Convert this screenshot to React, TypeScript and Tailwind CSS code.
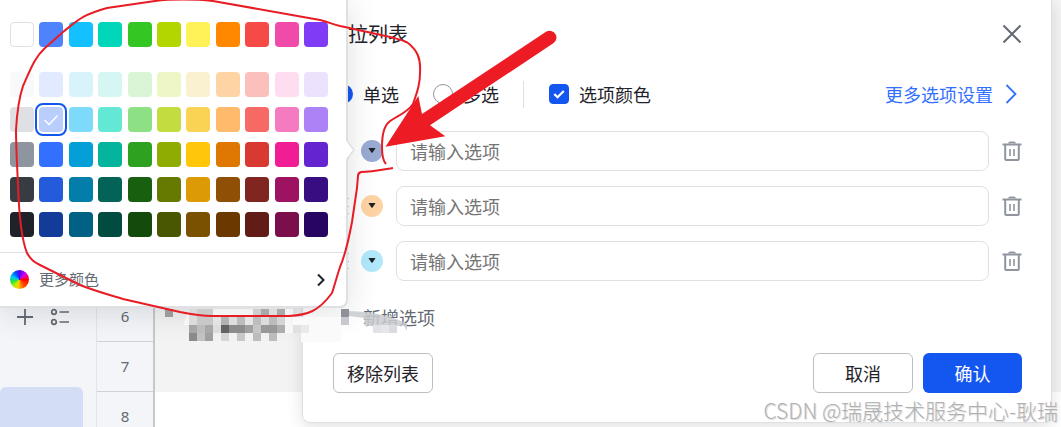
import { useState } from "react";

const palette = [
	["#ffffff", "#4e83fd", "#14c0ff", "#00d6b9", "#34c724", "#b3d600", "#fff258", "#ff8800", "#f54a45", "#f14ba9", "#7f3bf5"],
	["#f8f9fa", "#e1eaff", "#d9f3fd", "#d5f6f2", "#d9f5d6", "#eef6c6", "#faf1d1", "#fed4a4", "#fbbfbc", "#fdddef", "#ece2fe"],
	["#dee0e3", "#bacefd", "#7edafb", "#64e8d6", "#8ee085", "#c3dd40", "#fad355", "#ffba6b", "#f76964", "#f57ac0", "#ad82f7"],
	["#8f959e", "#3370ff", "#049fd7", "#04b49c", "#2ea121", "#8fac02", "#ffc60a", "#de7802", "#d83931", "#f01d94", "#6425d0"],
	["#373c43", "#245bdb", "#037eaa", "#036356", "#186010", "#667901", "#dc9b04", "#8f4f04", "#812520", "#9e1361", "#380d82"],
	["#1f2329", "#133c9a", "#006185", "#024b41", "#124b0c", "#495700", "#795101", "#6b3900", "#621c18", "#7a0f4b", "#270561"],
];

const options = [
	{ color: "#9aabd4", name: "选项一" },
	{ color: "#fed4a4", name: "选项二" },
	{ color: "#b1e8fc", name: "选项三" },
];

// x, y, grey level of every censored block
const blocks: [number, number, string][] = [
	[165, 309, "#9b9b9b"],
	[189, 309, "#dadada"], [197, 309, "#cbcbcb"], [205, 309, "#cbcbcb"],
	[253, 309, "#cecece"], [261, 309, "#a9a9a9"], [269, 309, "#dedede"], [277, 309, "#a9a9a9"], [293, 309, "#dddddd"],
	[189, 317, "#dcdcdc"], [197, 317, "#c8c8c8"], [205, 317, "#c8c8c8"], [213, 317, "#e3e3e3"],
	[221, 317, "#b2b2b2"], [229, 317, "#dedede"], [237, 317, "#bcbcbc"], [245, 317, "#e6e6e6"],
	[253, 317, "#bdbdbd"], [261, 317, "#dcdcdc"], [269, 317, "#bbbbbb"], [277, 317, "#d4d4d4"],
	[189, 325, "#a6a6a6"], [197, 325, "#bcbcbc"], [205, 325, "#a8a8a8"], [213, 325, "#dddddd"],
	[221, 325, "#636363"], [229, 325, "#8c8c8c"], [237, 325, "#8c8c8c"], [245, 325, "#a0a0a0"],
	[253, 325, "#c6c6c6"], [261, 325, "#999999"], [269, 325, "#989898"], [277, 325, "#adadad"],
	[293, 325, "#dfe0e1"], [301, 325, "#e9eaeb"],
	[189, 333, "#8a8a8a"], [197, 333, "#c2c2c2"], [205, 333, "#a0a0a0"], [221, 333, "#d5d5d5"],
	[237, 333, "#c8c8c8"], [253, 333, "#bcbcbc"], [269, 333, "#bcbcbc"],
	[341, 309, "#8d9096"], [341, 317, "#c8c9ce"],
	[373, 325, "#e2e3e8"], [381, 325, "#e6e6ea"], [389, 325, "#d9dae2"],
];

function TrashIcon() {
	return (
		<svg width="20" height="20" viewBox="0 0 20 20" fill="none" stroke="#8f959e">
			<path d="M0.500 3.500h19" strokeWidth="2" />
			<path d="M7 2.600c0-1 .6-1.200 1.400-1.200h3.200c.8 0 1.400.2 1.400 1.200" strokeWidth="1.800" />
			<path d="M3.200 4v14c0 .7.400 1 1 1h11.600c.6 0 1-.3 1-1v-14" strokeWidth="2" />
			<path d="M8 8v7M12 8v7" strokeWidth="1.600" />
		</svg>
	);
}

function Sheet() {
	return (
		<div className="flex h-full text-[#646a73]">
			<aside className="flex w-24 shrink-0 flex-col bg-[#f4f5f8]">
				<div className="flex items-center gap-4 pt-[307px] pl-4">
					<button aria-label="添加">
						<svg width="18" height="20" viewBox="0 0 18 20" stroke="#646a73" strokeWidth="1.800">
							<path d="M9 2v16M1 10h16" />
						</svg>
					</button>
					<button aria-label="列表">
						<svg width="20" height="20" viewBox="0 0 20 20" fill="none" stroke="#646a73" strokeWidth="1.700">
							<circle cx="4" cy="5" r="2.300" />
							<circle cx="4" cy="15" r="2.300" />
							<path d="M9.500 5H19M9.500 15H19" />
						</svg>
					</button>
				</div>
				<div className="mt-[60px] mr-[13px] flex-1 rounded-t-md bg-[#d3ddf5]" />
			</aside>
			<div className="flex w-[59px] shrink-0 flex-col overflow-hidden border-r-2 border-l border-r-[#c6c8cc] border-l-[#e2e4e8] bg-[#f4f5f8] pt-[292px] text-center font-['Noto_Sans',sans-serif] text-[15px] leading-[49px] font-normal">
				<div className="border-b border-[#cfd1d5]">6</div>
				<div className="border-b border-[#cfd1d5]">7</div>
				<div>8</div>
			</div>
			<div className="flex flex-1 flex-col">
				<div className="h-[392px] shrink-0 bg-[#f3f3f3]" />
				<div className="flex-1 bg-white" />
			</div>
		</div>
	);
}

function ListDialog() {
	const [mode, setMode] = useState("single");
	return (
		<div
			role="dialog"
			aria-label="下拉列表"
			className="absolute top-0 right-[9px] left-[302px] rounded-b-lg border border-t-0 border-[#dee0e3] bg-white pr-[29px] pb-[29px] pl-[30px] text-lg text-[#1f2329] shadow-[0_4px_16px_rgba(0,0,0,0.12)]"
		>
			<div className="flex h-[68px] items-center justify-between">
				<h2 className="-ml-[5px] text-xl">下拉列表</h2>
				<button aria-label="关闭">
					<svg width="20" height="20" viewBox="0 0 20 20" stroke="#646a73" strokeWidth="2">
						<path d="M1.500 1.500l17 17M18.500 1.500l-17 17" />
					</svg>
				</button>
			</div>
			<div className="flex h-[52px] items-center">
				<label className="flex items-center gap-[10px]">
					<input
						type="radio"
						name="mode"
						checked={mode === "single"}
						onChange={() => setMode("single")}
						className="size-5 appearance-none rounded-full border border-[#8f959e] checked:border-[6px] checked:border-[#1456f0]"
					/>
					单选
				</label>
				<label className="ml-[34px] flex items-center gap-[10px]">
					<input
						type="radio"
						name="mode"
						checked={mode === "multi"}
						onChange={() => setMode("multi")}
						className="size-5 appearance-none rounded-full border border-[#8f959e] checked:border-[6px] checked:border-[#1456f0]"
					/>
					多选
				</label>
				<div className="ml-6 h-[27px] w-px bg-[#dee0e3]" />
				<label className="ml-[25px] flex items-center gap-[10px]">
					<span className="grid size-5">
						<input
							type="checkbox"
							defaultChecked
							className="col-start-1 row-start-1 size-5 appearance-none rounded border border-[#8f959e] checked:border-[#1456f0] checked:bg-[#1456f0]"
						/>
						<svg className="pointer-events-none col-start-1 row-start-1" width="20" height="20" viewBox="0 0 20 20" fill="none" stroke="#fff" strokeWidth="2.200">
							<path d="M5.300 10l3.200 3.200 6.300-6.200" />
						</svg>
					</span>
					选项颜色
				</label>
				<a href="#more" className="mr-[5px] ml-auto flex items-center gap-3 text-[#3370ff]">
					更多选项设置
					<svg width="12" height="20" viewBox="0 0 12 20" fill="none" stroke="#3370ff" strokeWidth="1.800">
						<path d="M1.500 1l9 9-9 9" />
					</svg>
				</a>
			</div>
			<div className="mt-[11px] flex flex-col gap-[15px]">
				{options.map((option) => (
					<div key={option.name} className="flex items-center">
						<svg className="mr-2" width="20" height="20" viewBox="0 0 20 20" fill="#bbbfc4">
							<path d="M8 2h2v1H8zM8 10h2v1H8zM8 17h2v1H8zM14 2h2v1h-2zM14 10h2v1h-2zM14 17h2v1h-2z" />
						</svg>
						<button
							aria-label="选择颜色"
							className="mr-[13px] flex size-[22px] items-center justify-center rounded-full"
							style={{ backgroundColor: option.color }}
						>
							<svg width="8" height="6" viewBox="0 0 8 6" fill="#1f2329">
								<path d="M1 0h6q.5 0 .3.500L4.600 4.500q-.6.700-1.200 0L.7.500Q.5 0 1 0z" />
							</svg>
						</button>
						<input
							type="text"
							aria-label={option.name}
							placeholder="请输入选项"
							className="mr-[13px] h-10 min-w-0 flex-1 rounded-lg border border-[#dee0e3] px-[13px] placeholder:text-[#757575]"
						/>
						<button aria-label="删除">
							<TrashIcon />
						</button>
					</div>
				))}
			</div>
			<button className="flex h-[72px] items-center gap-[10px] text-[#646a73]">
				<svg width="20" height="20" viewBox="0 0 20 20" stroke="#646a73" strokeWidth="1.800">
					<path d="M12 2v9" />
				</svg>
				新增选项
			</button>
			<div className="flex gap-[10px]">
				<button className="mr-auto h-10 w-[100px] rounded-md border border-[#bbbfc4]">移除列表</button>
				<button className="h-10 w-[100px] rounded-md border border-[#bbbfc4]">取消</button>
				<button className="h-10 w-[99px] rounded-md bg-[#1456f0] text-white">确认</button>
			</div>
		</div>
	);
}

function ColorPicker() {
	return (
		<div className="absolute top-0 left-0 w-[348px] rounded-br-lg border-r-2 border-b-2 border-[#dee0e3] bg-white shadow-[0_4px_32px_rgba(31,35,41,0.14)]">
			<svg className="absolute top-[141px] -right-[9px]" width="9" height="18" viewBox="0 0 9 18">
				<path d="M0 0L1 0 8 9 1 18 0 18z" fill="#fff" />
				<path d="M1 0L8 9 1 18" fill="none" stroke="#dee0e3" strokeWidth="1.500" />
			</svg>
			<div className="flex flex-col gap-[10px] pt-[22px] pr-[18px] pb-[15px] pl-[10px]">
				{palette.map((row, i) => (
					<div key={i} className={i === 0 ? "mb-[15px] flex justify-between" : "flex justify-between"}>
						{row.map((color) => (
							<button
								key={color}
								aria-label={color}
								className={
									color === "#bacefd"
										? "flex h-[25px] w-6 items-center justify-center rounded-[4px] outline-2 outline-offset-2 outline-[#1456f0]"
										: color === "#ffffff"
											? "h-[25px] w-6 rounded-[4px] border border-[#dee0e3]"
											: "h-[25px] w-6 rounded-[4px]"
								}
								style={{ backgroundColor: color }}
							>
								{color === "#bacefd" && (
									<svg width="16" height="12" viewBox="0 0 16 12" fill="none" stroke="#fff" strokeWidth="1.500">
										<path d="M1.500 6l4.500 4.500L14.500 1.500" />
									</svg>
								)}
							</button>
						))}
					</div>
				))}
			</div>
			<button className="flex h-[54px] w-full items-center border-t border-[#dee0e3] pr-5 pl-[10px] text-[15px] text-[#646a73]">
				<span className="mr-[10px] size-[19px] rounded-full bg-[conic-gradient(#5000ff,#e000e0_50deg,#ff0000_90deg,#ff5a00_150deg,#ffd000_190deg,#b0f000_220deg,#20e040_255deg,#00c8ff_290deg,#0050ff_330deg,#5000ff)]" />
				更多颜色
				<svg className="ml-auto" width="10" height="14" viewBox="0 0 10 14" fill="none" stroke="#1f2329" strokeWidth="2">
					<path d="M2 1.500L7.500 7 2 12.500" />
				</svg>
			</button>
		</div>
	);
}

function Annotations() {
	return (
		<svg className="pointer-events-none absolute top-0 left-0" width="1061" height="427" viewBox="0 0 1061 427" fill="none">
			<path d="M189 309H301V333H285V325H183z" fill="#fff" fillOpacity=".55" />
			<path d="M293 317H341V342H301V333H293z" fill="#fafafa" />
			<path d="M349 311Q385 312 407 324V331L404 326H365L364 318 349 316z" fill="#c9cbcf" fillOpacity=".85" />
			{blocks.map(([x, y, fill]) => (
				<rect key={`${x}-${y}`} x={x} y={y} width="8" height="8" fill={fill} />
			))}
			<path
				d="M386 164C383 161 382 156 382 147C382 138 383 127 389 122C396 116 406 114 413 104C418 90 420 83 420 73C421 58 417 50 408 43C402 39 390 37 340 26C332 24 331 23 320 20L213 1C195 -1 170 -1 155 1L107 8C82 15 78 20 63 32L45 48C35 57 31 68 23 86C19 98 17 112 16 130C16 145 17 165 18 185C19 215 21 238 27 253C31 260 34 262 40 265L80 285C95 291 110 295 123 299L180 312C195 315 202 316 212 316H289C307 315 318 312 332 293C335 284 337 276 340 267C344 258 348 243 352 222L357 188L358 176Q358 173 361 172C372 172 381 170 393 168"
				stroke="#e81c24"
				strokeWidth="2"
			/>
			<path d="M385.500 146.700L418.300 96 422 114 546 31.800A6.700 6.700 0 0 1 553.300 43.300L430 125.300 445.300 136.300z" fill="#ed1c24" />
		</svg>
	);
}

export default function App() {
	return (
		<div className="relative h-screen overflow-hidden font-['Noto_Sans_CJK_SC','Liberation_Sans',sans-serif]">
			<Sheet />
			<ListDialog />
			<ColorPicker />
			<Annotations />
			<p className="pointer-events-none absolute right-[3px] bottom-[3px] text-[21px] leading-7 font-light text-[#b0b1b3] [text-shadow:1px_1px_1px_#d8d8d8]">
				CSDN @瑞晟技术服务中心-耿瑞
			</p>
		</div>
	);
}
